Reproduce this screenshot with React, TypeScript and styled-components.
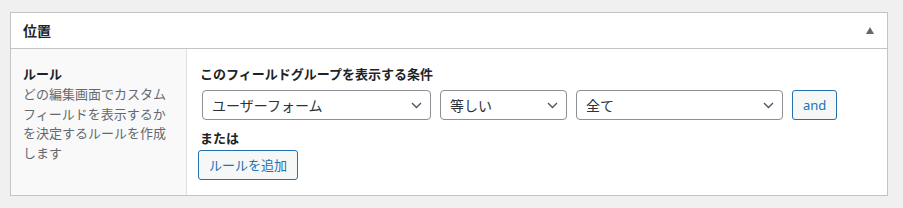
import React from 'react';
import styled, { createGlobalStyle } from 'styled-components';

const GlobalStyle = createGlobalStyle`
  html, body {
    margin: 0;
    padding: 0;
    background: #f0f0f1;
  }
  body {
    font-family: 'Noto Sans', 'Noto Sans CJK JP', sans-serif;
    color: #1d2327;
  }
  * {
    box-sizing: border-box;
  }
`;

const Page = styled.div`
  padding: 12px 15px 0 10px;
`;

const Postbox = styled.div`
  width: 878px;
  background: #fff;
  border: 1px solid #c3c4c7;
`;

const PostboxHeader = styled.div`
  display: flex;
  align-items: center;
  justify-content: space-between;
  height: 36px;
  padding: 0 13px 0 12px;
  border-bottom: 1px solid #c3c4c7;
`;

const PostboxTitle = styled.h2`
  margin: 0;
  font-size: 14px;
  font-weight: 700;
  line-height: 1.4;
  color: #1d2327;
`;

const Toggle = styled.svg`
  display: block;
  width: 8px;
  height: 7px;
`;

const FieldRow = styled.div`
  display: flex;
`;

const LabelCol = styled.div`
  width: 176px;
  flex: none;
  background: #f9f9f9;
  border-right: 1px solid #e1e1e1;
  padding: 16px 12px 15px 12px;
`;

const LabelTitle = styled.div`
  font-size: 13px;
  font-weight: 700;
  line-height: 18px;
  color: #1d2327;
`;

const LabelDesc = styled.p`
  margin: 2px 0 0;
  font-size: 13px;
  line-height: 19.5px;
  color: #646970;
`;

const InputCol = styled.div`
  flex: 1;
  padding: 16px 14px 15px 13px;
`;

const GroupTitle = styled.h4`
  margin: 0;
  font-size: 13px;
  font-weight: 700;
  line-height: 18px;
  color: #1d2327;
`;

const RuleRow = styled.div`
  display: flex;
  align-items: center;
  gap: 9px;
  margin: 7px 0 0 2px;
`;

const SelectBox = styled.div<{ $width: number }>`
  display: flex;
  align-items: center;
  justify-content: space-between;
  width: ${(p) => p.$width}px;
  height: 30px;
  padding: 0 8px 0 9px;
  border: 1px solid #8c8f94;
  border-radius: 4px;
  background: #fff;
  font-size: 14px;
  color: #2c3338;
`;

const Chevron = styled.svg`
  display: block;
  width: 11px;
  height: 7px;
  flex: none;
`;

const Button = styled.button`
  display: inline-flex;
  align-items: center;
  height: 30px;
  padding: 0 10px;
  border: 1px solid #2271b1;
  border-radius: 3px;
  background: #f6f7f7;
  color: #2271b1;
  font-family: inherit;
  font-size: 13px;
  line-height: 1;
  cursor: pointer;
`;

const OrLabel = styled.h4`
  margin: 9px 0 3px;
  font-size: 13px;
  font-weight: 700;
  line-height: 18px;
  color: #1d2327;
`;

const AddButton = styled(Button)`
  margin-left: -2px;
`;

const Select: React.FC<{ width: number; value: string }> = ({ width, value }) => (
  <SelectBox $width={width}>
    <span>{value}</span>
    <Chevron viewBox="0 0 11 7">
      <path d="M1 1l4.5 4.5L10 1" fill="none" stroke="#50575e" strokeWidth="1.4" />
    </Chevron>
  </SelectBox>
);

const App: React.FC = () => (
  <>
    <GlobalStyle />
    <Page>
      <Postbox>
        <PostboxHeader>
          <PostboxTitle>位置</PostboxTitle>
          <Toggle viewBox="0 0 8 7">
            <polygon points="4,0 8,7 0,7" fill="#646970" />
          </Toggle>
        </PostboxHeader>
        <FieldRow>
          <LabelCol>
            <LabelTitle>ルール</LabelTitle>
            <LabelDesc>
              どの編集画面でカスタムフィールドを表示するかを決定するルールを作成します
            </LabelDesc>
          </LabelCol>
          <InputCol>
            <GroupTitle>このフィールドグループを表示する条件</GroupTitle>
            <RuleRow>
              <Select width={229} value="ユーザーフォーム" />
              <Select width={127} value="等しい" />
              <Select width={207} value="全て" />
              <Button>and</Button>
            </RuleRow>
            <OrLabel>または</OrLabel>
            <AddButton>ルールを追加</AddButton>
          </InputCol>
        </FieldRow>
      </Postbox>
    </Page>
  </>
);

export default App;
